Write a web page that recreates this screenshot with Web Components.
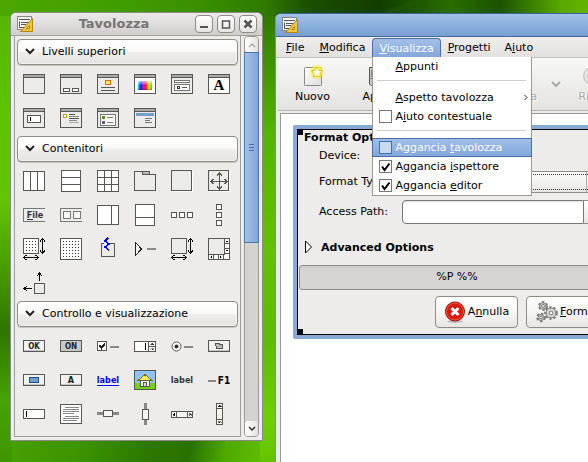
<!DOCTYPE html>
<html lang="it">
<head>
<meta charset="utf-8">
<title>Glade</title>
<style>
html, body { margin: 0; height: 100%; overflow: hidden; }
body { font: 11px/15px "DejaVu Sans", Verdana, sans-serif; color: #000; }
</style>
</head>
<body>
<glade-desktop>
  <glade-window class="palette" heading="Tavolozza" controls>
    <glade-palette></glade-palette>
  </glade-window>
  <glade-window class="editor" active>
    <glade-menubar></glade-menubar>
    <glade-toolbar></glade-toolbar>
    <glade-canvas><format-form></format-form></glade-canvas>
  </glade-window>
</glade-desktop>

<script>
const define = (name, html) => customElements.define(name, class extends HTMLElement {
  connectedCallback() {
    if (this.shadowRoot) return;
    const root = this.attachShadow({ mode: 'open' });
    root.innerHTML = '<style>*,:host{box-sizing:border-box}button,input,select{font:inherit;color:inherit;margin:0}svg{display:block}</style>'
      + (typeof html === 'function' ? html(this) : html);
  }
});

/* ---------- icon drawing helpers, 22 x 22 grid ---------- */
const G = '#555753';
const box = (x, y, w, h, f = '#ebebea', s = G, r = 0) =>
  `<rect x="${x + .5}" y="${y + .5}" width="${w - 1}" height="${h - 1}" fill="${f}" stroke="${s}" rx="${r}"/>`;
const fill = (x, y, w, h, f = G) => `<rect x="${x}" y="${y}" width="${w}" height="${h}" fill="${f}"/>`;
const win = (inner = '', f = '#ebebea') => box(0, 1, 22, 20, f) + fill(1, 2, 20, 2, '#aaa') + fill(1, 4, 20, 1) + inner;
const dots = (n) => { let s = ''; for (let y = 3; y < n - 2; y += 3) for (let x = 3; x < n - 2; x += 3) s += fill(x, y, 1, 1, '#333'); return s; };
const path = (d, s = '#000', f = 'none', w = 1) => `<path d="${d}" stroke="${s}" fill="${f}" stroke-width="${w}"/>`;
const vArrow = path('M19.5 1V15M17 3.5l2.5-3 2.5 3M17 12.5l2.5 3 2.5-3');
const hArrow = path('M1 19.5H15M3.5 17l-3 2.5 3 2.5M12.5 17l3 2.5-3 2.5');
const btn = (inner, f = '#f2f2f1') => box(0, 5, 22, 12, f, G, 1) + fill(1, 15, 20, 1, '#c4c4c2') + inner;
const txt = (x, y, t, size = 8, f = '#222', extra = '') =>
  `<text x="${x}" y="${y}" font-size="${size}" font-weight="bold" fill="${f}" text-anchor="middle" ${extra}>${t}</text>`;

const ICONS = {
  window: win(),
  dialog: win(box(3, 15, 7, 4, '#fff', G, 1) + box(12, 15, 7, 4, '#fff', G, 1)),
  message: win(box(8, 7, 6, 5, '#fce94f', '#e06a10', 1) + fill(4, 14, 14, 1) + fill(4, 17, 14, 1)),
  colorsel: win(`<defs><linearGradient id="h"><stop offset="0" stop-color="#0ee"/><stop offset=".2" stop-color="#11e"/><stop offset=".4" stop-color="#d0d"/><stop offset=".58" stop-color="#f11"/><stop offset=".78" stop-color="#fe0"/><stop offset="1" stop-color="#1e1"/></linearGradient><linearGradient id="v" x2="0" y2="1"><stop offset="0" stop-color="#fff" stop-opacity=".7"/><stop offset=".5" stop-color="#fff" stop-opacity="0"/><stop offset="1" stop-color="#000" stop-opacity=".3"/></linearGradient></defs>` + fill(4, 8, 14, 9, 'url(#h)') + fill(4, 8, 14, 9, 'url(#v)'), '#fff'),
  filesel: win(box(3, 7, 16, 3, '#fff', '#777', 1) + box(3, 11, 16, 7, '#fff', '#777', 1) + box(6, 13, 3, 3, '#fff', '#333') + fill(11, 14, 5, 1)),
  fontsel: win(txt(11, 17, 'A', 15, '#000', 'font-family="Liberation Serif"'), '#fff'),
  inputdlg: win(box(4, 8, 14, 8, '#fff', G, 1) + fill(7, 10, 1, 4, '#000')),
  about: win(box(3, 7, 4, 4, '#fff', '#c4a000') + fill(9, 7, 6, 1) + fill(9, 9, 10, 1, '#888') + fill(9, 11, 10, 1) + fill(9, 13, 8, 1, '#888') + fill(9, 15, 10, 1, '#aaa')),
  filechooser: win(box(3, 7, 16, 12, '#fff', '#777') + fill(5, 9, 3, 3, '#4e9a06') + fill(5, 14, 3, 3, '#75507b') + fill(10, 10, 6, 1, '#777') + fill(10, 15, 6, 1, '#777')),
  assistant: win(fill(2, 6, 18, 3, '#729fcf') + fill(11, 11, 7, 1, '#777') + fill(11, 13, 5, 1, '#777') + fill(11, 15, 7, 1, '#777')),

  hbox: box(0, 1, 22, 20, '#fff') + fill(7, 1, 1, 20) + fill(14, 1, 1, 20),
  vbox: box(1, 0, 20, 22, '#fff') + fill(1, 7, 20, 1) + fill(1, 14, 20, 1),
  table: box(0, 0, 22, 22, '#fff') + fill(7, 0, 1, 22) + fill(14, 0, 1, 22) + fill(0, 7, 22, 1) + fill(0, 14, 22, 1),
  notebook: path('M.5 1.5H8.5V4.5H21.5V20.5H.5Z', G, '#ebebea') + box(8, 1, 8, 4, '#bbb'),
  frame: fill(1, 1, 21, 21, '#fff') + box(0, 0, 21, 21),
  aspect: fill(1, 1, 21, 21, '#fff') + box(0, 0, 21, 21) + path('M11.5 3V19M3 11.5H19M9 5.5l2.5-2.5 2.5 2.5M9 16.500l2.5 2.5 2.5-2.5M5.5 9l-2.5 2.5 2.5 2.5M16.5 9l2.5 2.5-2.5 2.5', G),
  menubar: path('M22 4.5H.5V17.5H22', '#777', '#ededec') + txt(12, 14, 'File', 9, '#333') + fill(4, 15, 6, 1, '#333'),
  toolbar: path('M22 4.5H.5V17.5H22', '#777', '#ededec') + box(3, 7, 8, 8, '#f7f7f6', '#777', 1) + box(13, 7, 8, 8, '#f7f7f6', '#777', 1),
  hpaned: box(0, 1, 22, 20, '#fff') + fill(14, 1, 1, 20),
  vpaned: box(1, 0, 20, 22, '#fff') + fill(1, 13, 20, 1),
  hbbox: [0, 8, 16].map(x => box(x, 8, 6, 6, '#fff', G, 1)).join(''),
  vbbox: [0, 8, 16].map(y => box(8, y, 6, 6, '#fff', G, 1)).join(''),
  layout: box(0, 0, 16, 16, '#fff') + dots(16) + vArrow + hArrow,
  fixed: box(0, 0, 22, 22, '#fff') + dots(22),
  eventbox: box(4, 5, 14, 14, '#ebebea', G, 1) + fill(7, 4, 4, 2, '#edecea') + path('M11 0l-3 3 4 3-4 3 4 3', '#00f', 'none', 1.5),
  expander: path('M1.5 4.5V17.5L7.5 11Z', '#222', '#fff') + fill(13, 10, 9, 2, '#888'),
  viewport: box(0, 0, 16, 16) + vArrow + hArrow,
  scrolled: box(0, 0, 22, 22, '#fff') + box(0, 0, 17, 17) + fill(16, 5, 6, 1) + fill(16, 10, 6, 1) + fill(16, 15, 6, 1) + fill(5, 16, 1, 6) + fill(10, 16, 1, 6) + fill(15, 16, 1, 6) + fill(18, 3, 2, 1, '#000') + fill(18, 12, 2, 1, '#000') + fill(3, 18, 1, 2, '#000') + fill(12, 18, 1, 2, '#000'),
  alignment: box(11, 11, 11, 11, '#ebebea', G, 1) + path('M1 16.5H9M4 14l-3 2.5 3 2.5M16.5 1V9M14 4l2.5-3 2.5 3'),

  button: btn(txt(11, 14, 'OK', 8)),
  toggle: btn(txt(11, 14, 'ON', 8), '#c8c8c7'),
  check: box(0, 6, 10, 10, '#fff', G, 1) + path('M2.5 10l2 3 3.5-4.5', '#222', 'none', 2) + fill(13, 11, 9, 2, '#888'),
  spin: box(0, 6, 22, 11, '#fff', G, 1) + fill(11, 8, 1, 7, '#000') + fill(14, 6, 1, 11) + fill(15, 11, 6, 1) + path('M16.5 9.5l1.5-1.5 1.5 1.5ZM16.5 13.5l1.5 1.5 1.5-1.5Z', '#333', '#333', .5),
  radio: `<g shape-rendering="auto"><circle cx="5.500" cy="11.500" r="4.500" fill="#fff" stroke="#555"/><circle cx="5.500" cy="11.500" r="2" fill="#333"/></g>` + fill(13, 11, 9, 2, '#888'),
  fcbutton: btn(path('M7.5 8.5H11.5V9.5H14.5V13.5H8.5Z', G, '#bbb')),
  colorbtn: btn(box(6, 8, 10, 6, '#729fcf', '#204a87')),
  fontbtn: btn(txt(11, 14, 'A', 9)),
  link: txt(11, 14, 'label', 9, '#00f') + fill(0, 16, 22, 1, '#00f'),
  image: box(0, 1, 22, 20, '#8cc4ff') + fill(1, 14, 20, 6, '#73d216') + path('M4 11.5L11 5.5 18 11.5Z', '#8a6d00', '#fce94f') + box(6, 11, 10, 7, '#fff') + box(9, 13, 4, 5, '#ddd'),
  label: txt(11, 14, 'label', 9, '#333'),
  accel: fill(0, 11, 8, 2, '#888') + txt(16, 15, 'F1', 10, '#000'),
  entry: box(0, 6, 22, 10, '#fff', G, 1) + fill(3, 8, 1, 6, '#000'),
  textview: box(0, 1, 22, 20, '#fff') + [[5, 4, 14], [3, 6, 16], [3, 8, 16], [3, 10, 11], [5, 13, 14], [3, 15, 16], [3, 17, 14]].map(([x, y, w]) => fill(x, y, w, 1, '#888')).join(''),
  hscale: fill(0, 9, 22, 3, '#888') + box(6, 7, 10, 7, '#f6f6f5', G, 1),
  vscale: fill(10, 0, 3, 22, '#888') + box(8, 6, 7, 11, '#f6f6f5', G, 1),
  hscroll: box(0, 8, 22, 7, '#f6f6f5', G, 1) + fill(5, 8, 1, 7) + fill(16, 8, 1, 7) + path('M3.5 10l-1.5 1.5 1.5 1.5ZM18.5 10l1.5 1.5-1.5 1.5Z', '#000', '#000', .5),
  vscroll: box(8, 0, 7, 22, '#f6f6f5', G, 1) + fill(8, 5, 7, 1) + fill(8, 16, 7, 1) + path('M10 3.5l1.5-1.5 1.5 1.5ZM10 18.5l1.5 1.5 1.5-1.5Z', '#000', '#000', .5),
};

define('glade-icon', el => `<style>
:host{display:block;width:22px;height:22px}
svg{width:22px;height:22px;overflow:visible;font-family:"DejaVu Sans Condensed","DejaVu Sans",sans-serif}
</style><svg viewBox="0 0 22 22" shape-rendering="crispEdges" aria-hidden="true">${ICONS[el.getAttribute('name')] || ''}</svg>`);

define('glade-section', el => `<style>
:host{display:block;margin-bottom:1px}
button.head{display:flex;align-items:center;gap:7px;width:100%;height:26px;padding:0 7px 2px;border:1px solid #8e8c87;border-radius:4px;
 background:linear-gradient(#fff,#f8f8f7 48%,#eeedec 52%,#e4e3e1);box-shadow:inset 0 0 0 1px #fff8,0 1px 0 #c9c7c4;text-align:left}
.grid{display:grid;grid-template-columns:repeat(6,37px);grid-auto-rows:34px;padding:2px 0 0 6px;width:0}
.grid button{border:0;background:none;padding:0;width:22px;height:22px;align-self:center}
</style>
<button class="head" aria-expanded="true"><svg width="10" height="7" viewBox="0 0 10 7"><path d="M1 1l4 4 4-4" fill="none" stroke="#222" stroke-width="2"/></svg><slot></slot></button>
<div class="grid">${el.getAttribute('items').split(' ').map(n => `<button aria-label="${n}"><glade-icon name="${n}"></glade-icon></button>`).join('')}</div>`);

define('glade-palette', `<style>
:host{display:flex;gap:3px;padding:0 3px 3px}
.panel{flex:1;min-width:0;border:1px solid #a09e9a;border-top:0;padding:3px 2px 4px}
.bar{display:flex;flex-direction:column;width:15px;background:#d4d2d0;border:1px solid #9b9995;border-radius:4px}
.bar button{height:15px;padding:0;border:0;display:grid;place-items:center;background:linear-gradient(90deg,#fff,#e3e2e0);border-radius:3px}
.thumb{height:191px;margin:0 -1px;border:1px solid #4d77ae;background:linear-gradient(90deg,#a5c2e8,#7fa5d8);display:grid;place-items:center}
.thumb i{width:5px;height:7px;background:repeating-linear-gradient(#4a6fa5 0 1px,transparent 1px 3px)}
.space{flex:1}
</style>
<div class="panel">
<glade-section items="window dialog message colorsel filesel fontsel inputdlg about filechooser assistant">Livelli superiori</glade-section>
<glade-section items="hbox vbox table notebook frame aspect menubar toolbar hpaned vpaned hbbox vbbox layout fixed eventbox expander viewport scrolled alignment">Contenitori</glade-section>
<glade-section items="button toggle check spin radio fcbutton colorbtn fontbtn link image label accel entry textview hscale vscale hscroll vscroll">Controllo e visualizzazione</glade-section>
</div>
<div class="bar">
<button aria-label="Su"><svg width="8" height="6"><path d="M1 5l3-3 3 3" fill="none" stroke="#aaa" stroke-width="1.500"/></svg></button>
<div class="thumb"><i></i></div><div class="space"></div>
<button aria-label="Giù"><svg width="8" height="6"><path d="M1 1l3 3 3-3" fill="none" stroke="#333" stroke-width="1.500"/></svg></button>
</div>`);

define('glade-window', el => `<style>
:host{display:flex;flex-direction:column;border:1px solid #8b8985;border-radius:6px 6px 0 0;background:#edecea;overflow:hidden;box-shadow:inset 1px 0 #fff8}
:host([active]){border-top-color:#3d6298}
.title{display:flex;align-items:center;gap:4px;height:23px;padding:0 5px 0 6px;border-bottom:1px solid #a3a19d;background:linear-gradient(#ebeae9,#dedddb 50%,#cfcdcb)}
:host([active]) .title{background:linear-gradient(#a3c0e8,#8bb0de 50%,#779fd1);border-color:#446a9f}
h1{flex:1;margin:0;font:bold 13px/20px "DejaVu Sans",sans-serif;text-align:center;color:#777573}
.title button{width:18px;height:18px;padding:0;border:1px solid #8d8b87;border-radius:4px;background:linear-gradient(#fff,#e6e5e3);display:grid;place-items:center}
.title button svg{width:10px;height:10px;stroke:#555;fill:none;stroke-width:2}
</style>
<header class="title"><svg width="16" height="16" viewBox="0 0 16 16" aria-hidden="true"><rect x=".5" y=".5" width="14" height="13" fill="#f4f4f2" stroke="#888"/><path d="M2 3.500H13M2.500 5.500V11.500H10M4 6.500H12M4 8.500H9" stroke="#555" fill="none"/><path d="M15.500 2.500V15.500H3.500Z" fill="#edc83c" stroke="#b8860b"/><path d="M12.500 9.500v3H9.500Z" fill="#fdf3c0" stroke="#b8860b"/></svg>
<h1>${el.getAttribute('heading') || ''}</h1>
${el.hasAttribute('controls') ? `<button aria-label="Riduci"><svg viewBox="0 0 10 10"><path d="M1 8H9"/></svg></button><button aria-label="Ingrandisci"><svg viewBox="0 0 10 10"><path d="M1.500 2H8.500V9H1.500Z" stroke-width="1.500"/></svg></button><button aria-label="Chiudi"><svg viewBox="0 0 10 10"><path d="M1.500 1.500l7 7M8.500 1.500l-7 7" stroke-width="2.500"/></svg></button>` : ''}
</header><slot></slot>`);

define('glade-menu-item', el => {
  const kind = el.getAttribute('kind'), on = el.hasAttribute('checked');
  const mark = kind === 'check' ? `<input id="c" type="checkbox" ${on ? 'checked' : ''}>${on ? '<svg width="13" height="13"><path d="M3 6.500l2.500 3.500L10.500 3.500" fill="none" stroke="#000" stroke-width="2"/></svg>' : ''}` : '';
  const tag = kind === 'check' ? 'label' : 'button';
  return `<style>
:host{display:block;margin:0 -1px}
.row{display:grid;grid-template-columns:13px 1fr auto;column-gap:3px;align-items:center;width:100%;height:19px;padding:0 4px 0 7px;border:0;background:none;text-align:left}
:host([selected]) .row{padding:0 3px 0 6px;border:1px solid #4a6fa8;background:linear-gradient(#9fbfe8,#84a8da);color:#fff}
input{appearance:none;grid-area:1/1;width:13px;height:13px;border:1px solid #777;background:#fff}
:host([selected]) input{border-color:#4a6fa8;background:#c8d9f0}
svg{grid-area:1/1;pointer-events:none}
span{grid-column:2;grid-row:1}
svg.more{grid-area:1/3}
</style><${tag} class="row" ${kind === 'check' ? 'for="c"' : ''}>${mark}<span><slot></slot></span>${kind === 'sub' ? '<svg class="more" width="4" height="7"><path d="M.5 1l2.500 2.500-2.500 2.500" fill="none" stroke="#222"/></svg>' : ''}</${tag}>`;
});

define('glade-menubar', `<style>
:host{display:block;position:relative;z-index:2;padding:0 4px;border-bottom:1px solid #c4c2bf;background:linear-gradient(#efeeed,#e2e1df)}
nav{display:flex}
.item{position:relative}
.top{display:block;height:20px;padding:0 7px;border:0;background:none;line-height:19px}
.item:first-child .top{padding-left:6px}
.open .top{border:1px solid #4a6fa8;border-bottom:0;border-radius:4px 4px 0 0;padding:0 6px;background:linear-gradient(#a3c0e8,#84a8da);color:#fff;margin-top:1px;height:19px;line-height:17px}
.menu{position:absolute;top:100%;left:0;width:160px;border:1px solid #9a9894;border-top:0;background:#fff}
hr{height:1px;border:0;margin:4px 5px 7px 4px;background:#cfcdcb}
.item:nth-child(n+2){margin-left:1px}
.item:nth-child(n+3){margin-left:0}
</style>
<nav>
<div class="item"><button class="top"><u>F</u>ile</button></div>
<div class="item"><button class="top"><u>M</u>odifica</button></div>
<div class="item open"><button class="top" aria-expanded="true"><u>V</u>isualizza</button>
<div class="menu">
<glade-menu-item><u>A</u>ppunti</glade-menu-item><hr>
<glade-menu-item kind="sub"><u>A</u>spetto tavolozza</glade-menu-item>
<glade-menu-item kind="check">A<u>i</u>uto contestuale</glade-menu-item><hr>
<glade-menu-item kind="check" selected>Aggancia <u>t</u>avolozza</glade-menu-item>
<glade-menu-item kind="check" checked>Aggancia <u>i</u>spettore</glade-menu-item>
<glade-menu-item kind="check" checked>Aggancia <u>e</u>ditor</glade-menu-item>
</div></div>
<div class="item"><button class="top"><u>P</u>rogetti</button></div>
<div class="item"><button class="top">A<u>i</u>uto</button></div>
</nav>`);

define('glade-toolbar', `<style>
:host{display:flex;height:53px;margin-left:2px;padding-left:4px;border-bottom:1px solid #b5b3b0;background:linear-gradient(#f8f8f7,#e4e3e1);overflow:hidden}
button{flex:none;width:61px;padding:5px 0 0;border:0;background:none;display:flex;flex-direction:column;align-items:center;gap:2px}
button:disabled{color:#aaa9a6;text-shadow:1px 1px #fff}
.drop{width:17px;justify-content:center;padding:0}
i{flex:none;width:1px;margin:6px 10px;background:#bbb}
</style>
<button><svg width="24" height="24" viewBox="0 0 24 24"><defs><linearGradient id="p" x2="1" y2="1"><stop stop-color="#fff"/><stop offset="1" stop-color="#ddd"/></linearGradient><radialGradient id="glow"><stop stop-color="#fff200"/><stop offset=".6" stop-color="#fdf04a" stop-opacity=".8"/><stop offset="1" stop-color="#fff200" stop-opacity="0"/></radialGradient></defs><rect x="3" y="21" width="18" height="2" fill="#0002"/><rect x="3.500" y="4.500" width="17" height="18" rx="1" fill="url(#p)" stroke="#888"/><circle cx="16" cy="9" r="8" fill="url(#glow)"/><path d="M16 4l1.800 3.200 3.600.6-2.500 2.700.5 3.600L16 12.700l-3.400 1.400.5-3.600-2.500-2.700 3.600-.6Z" fill="#fff" stroke="#e0c800"/></svg>Nuovo</button>
<button><svg width="24" height="24"><path d="M7.500 4.500H20.500V22.500H9L7.500 21Z" fill="#c9c9c6" stroke="#555"/><path d="M7.500 15.500H20" stroke="#777"/><rect x="9" y="7" width="2" height="7" fill="#888"/></svg>Apri</button>
<button aria-label="Salva"></button><i></i>
<button disabled><svg width="24" height="24"><path d="M5 12C9 6 18 6 18 14s-5 7-8 7" fill="none" stroke="#bbb" stroke-width="3"/></svg>Annulla</button>
<button class="drop" disabled aria-label="Altro"><svg width="10" height="7"><path d="M1 1l4 4 4-4" fill="none" stroke="#aaa" stroke-width="2"/></svg></button>
<button disabled><svg width="24" height="24"><path d="M18 7C10 1-1 5 1 15c1 6 7 7 11 6" fill="#e4e3e1" stroke="#bbb"/><path d="M15 10C10 6 4 8 5 14c1 4 4 5 7 5" fill="#eee" stroke="#bbb"/></svg>Ripeti</button>`);

define('glade-canvas', `<style>
:host{display:block;flex:1;margin:2px 0 0 4px;padding:11px 12px;border:1px solid #9b9995;background:#fff;overflow:hidden}
.sel{position:relative;width:max-content;border:4px solid #86a9d8;border-radius:2px}
.sel::before,.sel::after{content:"";position:absolute;left:0;width:6px;height:6px;background:#000}
.sel::before{top:0}.sel::after{bottom:0}
</style><div class="sel"><slot></slot></div>`);

define('format-form', `<style>
:host{display:block;min-width:320px;padding:0 1px 6px;border:1px solid #000;background:#edecea}
h2{margin:0 0 3px 5px;font:bold 11px/15px "DejaVu Sans",sans-serif}
.rows{display:grid;grid-template-columns:83px 1fr;grid-template-rows:16px 22px 24px;row-gap:7px;align-items:center;padding:0 0 0 20px}
.rows label,.rows span{padding-bottom:2px}
select,input{min-width:0;width:100%}
select{appearance:none;height:22px;border:1px solid #8e8c87;border-radius:4px;background:linear-gradient(90deg,transparent 183px,#aaa 183px 184px,transparent 184px),linear-gradient(#fff,#e6e5e3);outline:1px dotted #333;outline-offset:-4px}
.path{display:flex;height:24px}
input{flex:0 1 182px;border:1px solid #777;border-radius:4px 0 0 4px;background:#fff;box-shadow:inset 0 1px 1px #0002}
.path button{flex:1;border:1px solid #8e8c87;border-left:0;border-radius:0 4px 4px 0;background:linear-gradient(#fff,#e6e5e3)}
.adv{display:flex;align-items:center;gap:9px;height:16px;margin:15px 0 10px 6px;padding:0;border:0;background:none;font-weight:bold}
.progress{height:25px;border:1px solid #8e8c87;border-radius:3px;background:linear-gradient(#cac9c7,#d6d5d3 4px);line-height:21px;text-align:center}
.actions{display:flex;justify-content:flex-end;gap:8px;margin-top:6px;padding-right:6px}
.actions button{display:flex;align-items:center;justify-content:center;gap:2px;width:83px;height:32px;padding:0;border:1px solid #8e8c87;border-radius:4px;background:linear-gradient(#fff,#f6f6f5 50%,#e6e5e3)}
.actions span{padding-bottom:2px}
</style>
<h2>Format Options</h2>
<div class="rows">
<span>Device:</span><span></span>
<label for="type">Format Type:</label><select id="type"><option></option></select>
<label for="path">Access Path:</label><div class="path"><input id="path" type="text"><button aria-label="Sfoglia"></button></div>
</div>
<button class="adv" aria-expanded="false"><svg width="7" height="14"><path d="M.5 1V13L6.500 7Z" fill="#fff" stroke="#000"/></svg>Advanced Options</button>
<div class="progress" role="progressbar">%P %%</div>
<div class="actions">
<button><svg width="22" height="24" viewBox="0 0 22 24"><ellipse cx="11" cy="21.500" rx="8" ry="1.500" fill="#0003"/><circle cx="11" cy="11.500" r="9.500" fill="#dc1a0c" stroke="#a40000"/><circle cx="11" cy="11.500" r="8.500" fill="none" stroke="#f05a48"/><path d="M7.500 8l7 7M14.500 8l-7 7" stroke="#fff" stroke-width="3"/></svg><span>A<u>n</u>nulla</span></button>
<button><svg width="22" height="24" viewBox="0 0 22 24" fill="none"><g stroke="#777" stroke-width="3" stroke-dasharray="2 1.800"><circle cx="7" cy="6" r="3.500"/><circle cx="5" cy="17.500" r="3.300"/><circle cx="15" cy="13" r="5.300"/></g><g fill="#d9d9d6" stroke="#777"><circle cx="7" cy="6" r="3.300"/><circle cx="5" cy="17.500" r="3"/><circle cx="15" cy="13" r="5"/></g><g fill="#f4f4f2" stroke="#777"><circle cx="7" cy="6" r="1.500"/><circle cx="5" cy="17.500" r="1.300"/><circle cx="15" cy="13" r="2"/></g></svg><span><u>F</u>ormat</span></button>
</div>`);

define('glade-desktop', `<style>
:host{display:block;position:relative;height:100vh;overflow:hidden;
background:
 linear-gradient(160deg,transparent 62%,#1b5c00aa 70%,transparent 71%) 290px 0/150px 16px no-repeat,
 linear-gradient(90deg,#4aa800 0,#3f9c00 130px,#3a8f00 200px,#2f7a00 265px,#1a4f00 310px,#123d00 380px,#2a6e00 450px,#1c5200 500px,#58a800 560px,#62b400) 0 0/100% 16px no-repeat,
 linear-gradient(#54b800 16px,#5cc400 120px,#63c400 200px,#3f9000 290px,#2e7600 330px,#46a300 400px,#3f9600) 0 0/12px 100% no-repeat,
 linear-gradient(#2a7000,#3a8c00 50px,#52b400 130px,#62c200 250px,#5cbc00 340px,#6cd000 420px,#62c400) 260px 0/20px 100% no-repeat,
 linear-gradient(100deg,#46a200 0,#3d9400 80px,#2c7800 150px,#2a7200 190px,#4ea900 225px,#63c400 275px) 0 100%/280px 26px no-repeat,
 #3f9400}
::slotted(glade-window){position:absolute}
::slotted(.palette){left:10px;top:12px;width:253px}
::slotted(.editor){left:275px;right:-48px;top:13px;bottom:-20px}
</style><slot></slot>`);
</script>
</body>
</html>
